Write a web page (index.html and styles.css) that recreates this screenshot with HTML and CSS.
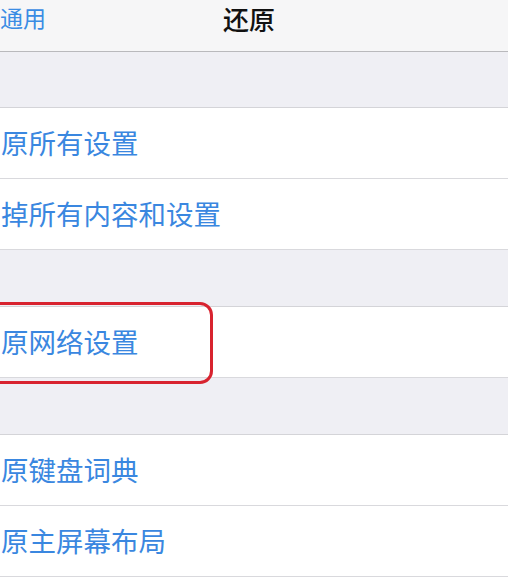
FILE: index.html
```html
<!DOCTYPE html>
<html lang="zh">
<head>
<meta charset="utf-8">
<link rel="stylesheet" href="styles.css">
</head>
<body>
<div class="page">
  <header class="nav">
    <span class="back">通用</span>
    <span class="title">还原</span>
    <span class="spacer"></span>
  </header>
  <div class="gap first"></div>
  <div class="row"><span class="label">原所有设置</span></div>
  <div class="row"><span class="label">掉所有内容和设置</span></div>
  <div class="gap"></div>
  <div class="row highlight"><span class="label">原网络设置</span><span class="mark"></span></div>
  <div class="gap"></div>
  <div class="row"><span class="label">原键盘词典</span></div>
  <div class="row"><span class="label">原主屏幕布局</span></div>
  <div class="rest"></div>
</div>
</body>
</html>
```
FILE: styles.css
```css
html, body {
  margin: 0;
  padding: 0;
  background: #ffffff;
}
.page {
  width: 508px;
  height: 584px;
  overflow: hidden;
  display: flex;
  flex-direction: column;
  font-family: "Noto Sans CJK SC", "Noto Sans", sans-serif;
}
.nav {
  height: 51px;
  flex: none;
  box-sizing: content-box;
  padding: 0 10px 0 0;
  background: #f6f6f7;
  border-bottom: 1px solid #b9b9bc;
  display: grid;
  grid-template-columns: 1fr auto 1fr;
  align-items: start;
}
.back {
  color: #3a8ce4;
  font-size: 23px;
  line-height: 1.45;
  padding-top: 1px;
}
.title {
  font-size: 26px;
  line-height: 1.45;
  font-weight: 500;
  color: #111;
}
.gap {
  height: 56px;
  flex: none;
  background: #efeff4;
  border-bottom: 1px solid #d4d4d8;
}
.gap.first {
  height: 55px;
}
.row {
  height: 70px;
  flex: none;
  background: #fff;
  border-bottom: 1px solid #d9d9dd;
  display: flex;
  align-items: center;
  position: relative;
}
.label {
  margin-left: 1px;
  font-size: 27.5px;
  line-height: 1;
  color: #3a87e0;
  white-space: nowrap;
}
.mark {
  position: absolute;
  left: -20px;
  top: -5px;
  width: 227px;
  height: 76px;
  border: 3px solid #d8232f;
  border-radius: 13px;
}
.rest {
  flex: 1;
  background: #fff;
}
```
